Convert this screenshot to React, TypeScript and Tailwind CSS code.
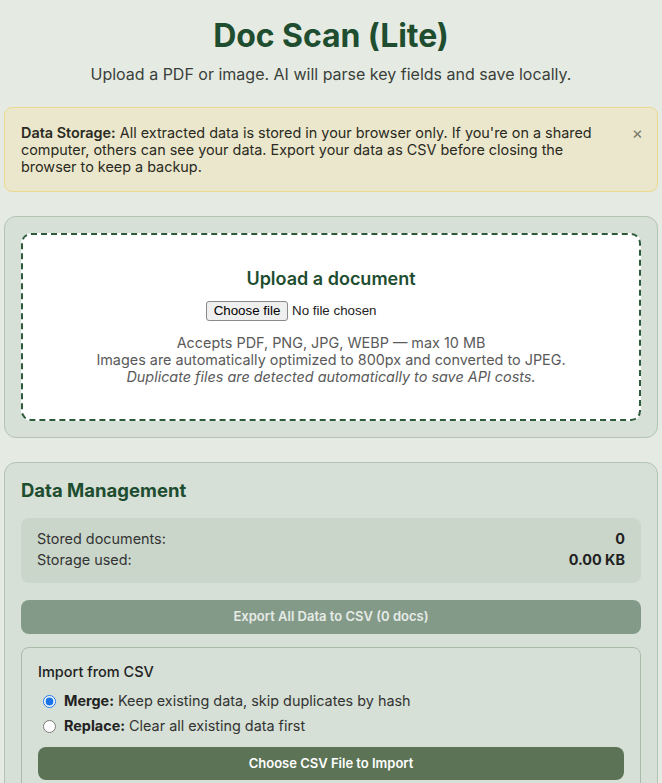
import React from "react";

export default function App() {
  return (
    <div className="min-h-screen bg-[#e5ebe3] text-[#222] px-1 pb-6" style={{ fontFamily: "Inter, 'Noto Sans', sans-serif" }}>
      <div className="pt-[16px] text-center">
        <h1 className="text-[32px] leading-[40px] font-bold text-[#1e4d30] tracking-[-0.1px]">Doc Scan (Lite)</h1>
        <p className="mt-[8px] text-[16px] leading-[20px] text-[#3a3f3a]">Upload a PDF or image. AI will parse key fields and save locally.</p>
      </div>

      <div className="mt-[23px] flex items-start justify-between rounded-[8px] border border-[#ecd98f] bg-[#ebe7cc] px-[16px] py-[16px]">
        <p className="max-w-[590px] text-[14.4px] leading-[17px] text-[#2a2a22]">
          <strong className="font-semibold">Data Storage:</strong> All extracted data is stored in your browser only. If you're on a shared computer, others can see your data. Export your data as CSV before closing the browser to keep a backup.
        </p>
        <button className="mr-[-2px] mt-[-1px] text-[17px] leading-[20px] text-[#7a7a6a]">×</button>
      </div>

      <div className="mt-[24px] rounded-[12px] border border-[#b3c4b3] bg-[#d6e0d6] p-[16px]">
        <div className="rounded-[10px] border-2 border-dashed border-[#2c5a3a] bg-white px-6 pt-[33px] pb-[34px] text-center">
          <h2 className="text-[18px] leading-[22px] font-semibold text-[#1e4d30]">Upload a document</h2>
          <div className="mt-[11px] flex justify-center" style={{ fontFamily: "'Liberation Sans', Arial, sans-serif" }}>
            <div className="flex w-[250px] items-center text-[13.33px]">
              <button className="h-[20px] w-[82px] rounded-[3px] border border-[#8a8a8a] bg-[#efefef] text-[13.33px] leading-[16px] text-black">Choose file</button>
              <span className="ml-[4px] text-[#222]">No file chosen</span>
            </div>
          </div>
          <div className="mt-[13px] text-[14.4px] leading-[17px] text-[#5a5a5a]">
            <p>Accepts PDF, PNG, JPG, WEBP — max 10 MB</p>
            <p>Images are automatically optimized to 800px and converted to JPEG.</p>
            <p className="italic">Duplicate files are detected automatically to save API costs.</p>
          </div>
        </div>
      </div>

      <div className="mt-[24px] rounded-[12px] border border-[#b3c4b3] bg-[#d6e0d6] px-[16px] pt-[15px] pb-[16px]">
        <h2 className="text-[18.5px] leading-[24px] font-bold text-[#1e4d30]">Data Management</h2>
        <div className="mt-[16px] rounded-[8px] bg-[#cad6ca] px-[16px] pt-[10px] pb-[13px] text-[14.4px] leading-[21px]">
          <div className="flex justify-between">
            <span className="text-[#333]">Stored documents:</span>
            <span className="font-bold text-[#222]">0</span>
          </div>
          <div className="flex justify-between">
            <span className="text-[#333]">Storage used:</span>
            <span className="font-bold text-[#222]">0.00 KB</span>
          </div>
        </div>
        <button className="mt-[17px] h-[34px] w-full rounded-[8px] bg-[#849a89] text-[13px] font-semibold text-[#e6ebe6]">Export All Data to CSV (0 docs)</button>
        <div className="mt-[13px] rounded-[8px] border border-[#a9bba9] bg-[#d6e0d6] px-[16px] pt-[15px] pb-[16px]">
          <h3 className="text-[14.5px] leading-[18px] font-medium text-[#222]">Import from CSV</h3>
          <label className="mt-[10px] flex items-center text-[14.4px] leading-[20px] text-[#333]">
            <input type="radio" name="mode" defaultChecked className="ml-[5px] mr-[8px] h-[13px] w-[13px] accent-[#1a73e8]" />
            <span><strong className="font-bold text-[#222]">Merge:</strong> Keep existing data, skip duplicates by hash</span>
          </label>
          <label className="mt-[5px] flex items-center text-[14.4px] leading-[20px] text-[#333]">
            <input type="radio" name="mode" className="ml-[5px] mr-[8px] h-[13px] w-[13px]" />
            <span><strong className="font-bold text-[#222]">Replace:</strong> Clear all existing data first</span>
          </label>
          <button className="mt-[11px] h-[33px] w-full rounded-[8px] bg-[#5c7355] text-[13px] font-semibold text-white">Choose CSV File to Import</button>
        </div>
      </div>
    </div>
  );
}
